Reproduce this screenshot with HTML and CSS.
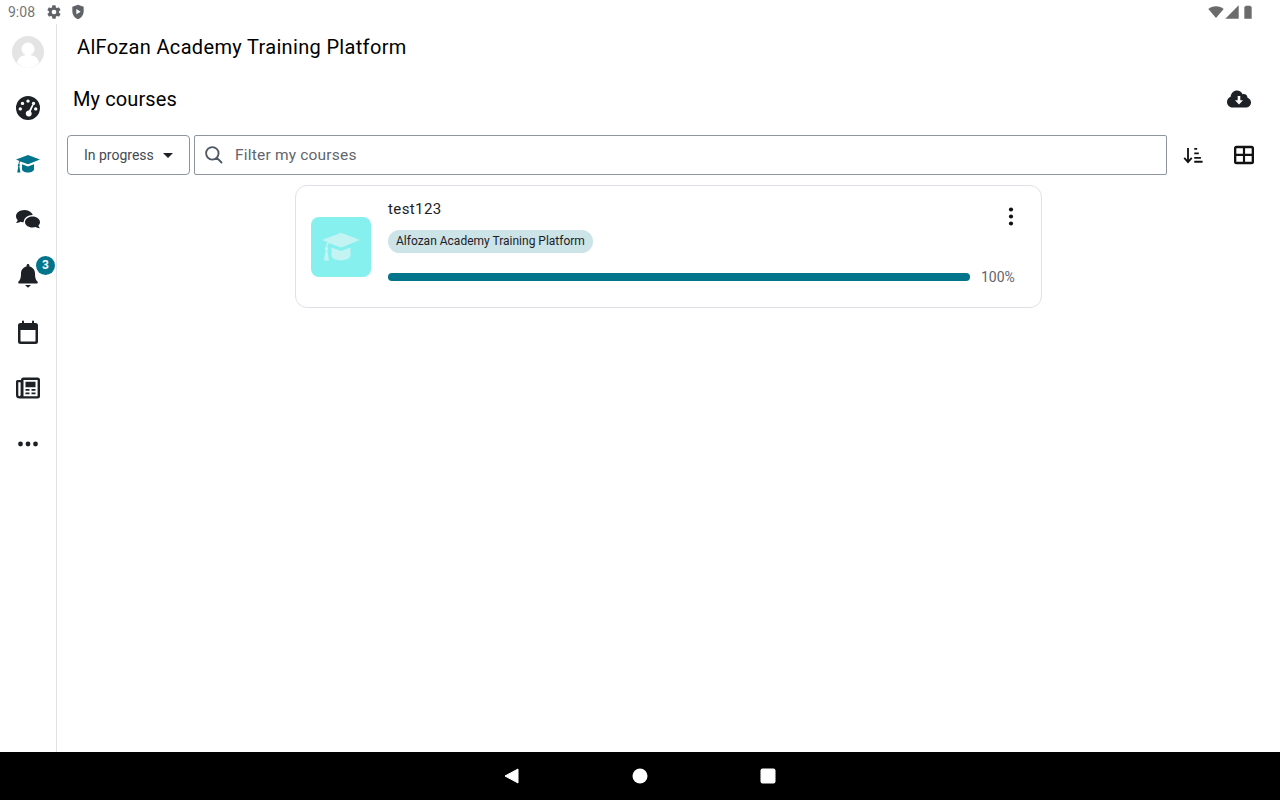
FILE: index.html
```html
<!DOCTYPE html>
<html lang="en">
<head>
    <meta charset="UTF-8">
    <title>My courses</title>
    <link rel="stylesheet" href="styles.css">
</head>
<body>
    <div class="status-bar">
        <span class="clock">9:08</span>
        <svg class="status-icon" viewBox="0 0 24 24"><path d="M19.4 13c.1-.3.1-.7.1-1s0-.7-.1-1l2.1-1.600c.2-.1.2-.4.1-.6l-2-3.500c-.1-.2-.4-.3-.6-.2l-2.500 1c-.5-.4-1.100-.7-1.700-1l-.4-2.700c0-.2-.2-.4-.5-.4h-4c-.2 0-.4.2-.5.4l-.4 2.700c-.6.3-1.100.6-1.700 1l-2.500-1c-.2-.1-.5 0-.6.2l-2 3.500c-.1.2-.1.5.1.6L4.500 11c0 .3-.1.7-.1 1s0 .7.1 1l-2.100 1.600c-.2.1-.2.4-.1.6l2 3.500c.1.2.4.3.6.2l2.500-1c.5.4 1.100.7 1.700 1l.4 2.700c0 .2.2.4.5.4h4c.2 0 .4-.2.5-.4l.4-2.700c.6-.3 1.100-.6 1.700-1l2.500 1c.2.1.5 0 .6-.2l2-3.500c.1-.2.1-.5-.1-.6zM12 15.500a3.500 3.500 0 1 1 0-7 3.500 3.500 0 0 1 0 7z"/></svg>
        <svg class="status-icon" viewBox="0 0 24 24"><path fill-rule="evenodd" d="M12 1 3.500 4v7c0 5.500 3.600 10.300 8.500 12 4.900-1.700 8.500-6.500 8.500-12V4zM9.500 7.500v8l6.500-4z"/></svg>
        <span class="status-right">
            <svg class="status-icon" viewBox="0 0 24 24"><path d="M12 21 .5 7.500C3.500 4.800 7.500 3.500 12 3.500s8.500 1.300 11.500 4z"/></svg>
            <svg class="status-icon" viewBox="0 0 24 24"><path d="M22 2v20H2z"/></svg>
            <svg class="status-icon" viewBox="0 0 24 24"><path d="M8 4V2.500h8V4h1.500v18h-11V4z"/></svg>
        </span>
    </div>

    <div class="app">
        <nav class="rail">
            <div class="rail-item avatar-item">
                <svg class="avatar" viewBox="0 0 32 32">
                    <circle cx="16" cy="16" r="16" fill="#e4e4e4"/>
                    <circle cx="16" cy="13" r="6.500" fill="#fff"/>
                    <path d="M5 27c1-6 5-8 11-8s10 2 11 8c-3 3-7 5-11 5s-8-2-11-5z" fill="#fff"/>
                </svg>
            </div>
            <div class="rail-item">
                <svg class="rail-icon" viewBox="0 0 24 24"><path fill-rule="evenodd" d="M12 0a12 12 0 1 0 0 24 12 12 0 0 0 0-24zm0 3.400a1.700 1.700 0 1 1 0 3.400 1.700 1.700 0 0 1 0-3.400zM6.500 5.700a1.700 1.700 0 1 1 0 3.400 1.700 1.700 0 0 1 0-3.400zm11 0a1.700 1.700 0 1 1 0 3.400 1.700 1.700 0 0 1 0-3.400zM4.300 11.200a1.700 1.700 0 1 1 0 3.400 1.700 1.700 0 0 1 0-3.400zm11.900-2.700 1.400.5-2.800 6.400a3 3 0 1 1-1.800-.8zM19.700 11.200a1.700 1.700 0 1 1 0 3.400 1.700 1.700 0 0 1 0-3.400z"/></svg>
            </div>
            <div class="rail-item">
                <svg class="rail-icon rail-icon-active" viewBox="0 0 24 24"><path d="M12 3 0 7.600l3.400 1.300c-.5.900-.8 2-.9 3a1.400 1.400 0 0 0-.2 2.300L1.200 20.500h3.200l-1-6.300a1.400 1.400 0 0 0-.1-2.200c.1-1 .5-1.900 1.100-2.600L12 12.300l12-4.700z"/><path d="M6 12.300v4.900c0 1.800 2.700 3.300 6 3.300s6-1.500 6-3.300v-4.900l-6 2.300z"/></svg>
            </div>
            <div class="rail-item">
                <svg class="rail-icon" viewBox="0 0 24 24"><path d="M8.500 2C3.800 2 0 4.800 0 8.300c0 1.400.6 2.700 1.700 3.700-.4 1.300-1.300 2.300-1.400 2.400-.1.200 0 .5.300.5 1.500 0 2.900-.6 3.900-1.200 1.200.4 2.600.6 4 .6 4.700 0 8.500-2.800 8.500-6S13.200 2 8.500 2z"/><path d="M16.500 8.500c4.200 0 7.500 2.500 7.500 5.600 0 1.400-.6 2.600-1.600 3.500.3 1.200 1.100 2.100 1.300 2.300.1.200 0 .4-.2.400-1.500 0-2.800-.5-3.700-1.200-1 .3-2.100.5-3.300.5-4.200 0-7.500-2.400-7.500-5.500s3.300-5.600 7.500-5.600z" stroke="#fff" stroke-width="3" paint-order="stroke"/></svg>
            </div>
            <div class="rail-item">
                <svg class="rail-icon" viewBox="0 0 24 24"><path d="M12 0c-.8 0-1.400.6-1.400 1.400v1C7 3.100 5 6 5 9.500c0 5.500-1.500 7-2.600 8.300-.5.600-.2 1.700.7 1.700h17.800c.9 0 1.200-1.100.7-1.700C20.500 16.500 19 15 19 9.500c0-3.500-2-6.400-5.600-7.100v-1C13.400.6 12.800 0 12 0z"/><path d="M9 21h6l-3 2.800z"/></svg>
                <span class="badge">3</span>
            </div>
            <div class="rail-item">
                <svg class="rail-icon" viewBox="0 0 24 24"><path fill-rule="evenodd" d="M7 .5a1 1 0 0 1 1 1V3h8V1.500a1 1 0 1 1 2 0V3h1.500A2.500 2.500 0 0 1 22 5.500v16a2.500 2.500 0 0 1-2.500 2.500h-15A2.500 2.500 0 0 1 2 21.500v-16A2.500 2.500 0 0 1 4.500 3H6V1.500a1 1 0 0 1 1-1zM4.500 10v11c0 .3.200.5.500.5h14c.3 0 .5-.2.500-.5V10z"/></svg>
            </div>
            <div class="rail-item">
                <svg class="rail-icon" viewBox="0 0 24 24"><path fill-rule="evenodd" d="M7.500 1.500h14A2.500 2.500 0 0 1 24 4v16a2.500 2.500 0 0 1-2.500 2.500h-18A3.500 3.500 0 0 1 0 19V5.500A1.500 1.500 0 0 1 1.500 4H5V4a2.500 2.500 0 0 1 2.500-2.500zM7.500 4v15.500c0 .3 0 .5-.1.700h13.800c.2 0 .4-.2.400-.4V4zM2.300 6.300V19a1.100 1.100 0 0 0 2.300 0V6.300z"/><path d="M9.500 5.800h10v5.500h-10zM9.500 13h4v1.800h-4zM15.500 13h4v1.800h-4zM9.500 16.500h4v1.800h-4zM15.500 16.500h4v1.800h-4z"/></svg>
            </div>
            <div class="rail-item">
                <svg class="rail-icon" viewBox="0 0 24 24"><circle cx="4.500" cy="12" r="2.400"/><circle cx="12" cy="12" r="2.400"/><circle cx="19.500" cy="12" r="2.400"/></svg>
            </div>
        </nav>

        <main class="content">
            <h1 class="site-title">AlFozan Academy Training Platform</h1>

            <div class="page-head">
                <h2 class="page-title">My courses</h2>
                <svg class="cloud" viewBox="0 0 24 24"><path fill-rule="evenodd" d="M10 3.500c2.500 0 4.700 1.500 5.600 3.800 2.500-.8 4.900 1 4.900 3.500 2 .7 3.500 2.500 3.500 4.700 0 2.800-2.200 5-5 5H5.500C2.500 20.500 0 18 0 15c0-2.300 1.500-4.400 3.600-5.200C4 6.200 6.700 3.500 10 3.500zm.7 5.500v4.300H8l4 4.200 4-4.200h-2.700V9z"/></svg>
            </div>

            <div class="filters">
                <button class="select">In progress<span class="caret"></span></button>
                <div class="search">
                    <svg class="search-icon" viewBox="0 0 24 24"><path d="M21 21l-5.400-5.400M17.500 10a7.500 7.500 0 1 1-15 0 7.500 7.500 0 0 1 15 0z" fill="none" stroke="currentColor" stroke-width="2.200" stroke-linecap="round"/></svg>
                    <span class="search-text">Filter my courses</span>
                </div>
                <div class="tool">
                    <svg class="tool-icon" viewBox="0 0 24 24"><path d="M6 3.500v16M1.500 15.500 6 20.500l4.500-5" fill="none" stroke="#111" stroke-width="2.200"/><path d="M13.500 3.500h3.500v2.200h-3.500zM13.500 9h5.500v2.200h-5.500zM13.500 14.300h8v2.200h-8zM13.500 19h10v2.200h-10z"/></svg>
                </div>
                <div class="tool">
                    <svg class="tool-icon" viewBox="0 0 24 24"><path fill-rule="evenodd" d="M3 1h18a3 3 0 0 1 3 3v16a3 3 0 0 1-3 3H3a3 3 0 0 1-3-3V4a3 3 0 0 1 3-3zM2.800 3.800v6.800h7.900V3.800zm10.500 0v6.800h7.900V3.800zM2.800 13.300v6.900h7.900v-6.900zm10.500 0v6.900h7.900v-6.900z"/></svg>
                </div>
            </div>

            <div class="course-list">
                <article class="course-card">
                    <div class="thumb">
                        <svg class="thumb-icon" viewBox="0 0 24 24"><path d="M12 3 0 7.600l3.400 1.300c-.5.900-.8 2-.9 3a1.400 1.400 0 0 0-.2 2.300L1.200 20.500h3.200l-1-6.300a1.400 1.400 0 0 0-.1-2.200c.1-1 .5-1.900 1.100-2.600L12 12.300l12-4.700z"/><path d="M6 12.300v4.900c0 1.800 2.700 3.300 6 3.300s6-1.500 6-3.300v-4.900l-6 2.300z"/></svg>
                    </div>
                    <div class="course-body">
                        <div class="course-top">
                            <div class="course-name">test123</div>
                            <svg class="kebab" viewBox="0 0 6 19"><circle cx="3" cy="2.500" r="2.100"/><circle cx="3" cy="9.500" r="2.100"/><circle cx="3" cy="16.500" r="2.100"/></svg>
                        </div>
                        <span class="chip">Alfozan Academy Training Platform</span>
                        <div class="progress-row">
                            <div class="progress"><div class="progress-fill" style="width: 100%"></div></div>
                            <span class="progress-text">100%</span>
                        </div>
                    </div>
                </article>
            </div>
        </main>
    </div>

    <div class="nav-bar">
        <svg class="nav-icon" viewBox="0 0 16 16"><path d="M14 1v14L1 8z" stroke="#fff" stroke-linejoin="round"/></svg>
        <svg class="nav-icon" viewBox="0 0 16 16"><circle cx="8" cy="8" r="7.500"/></svg>
        <svg class="nav-icon" viewBox="0 0 16 16"><rect x="0.500" y="0.500" width="15" height="15" rx="2"/></svg>
    </div>
</body>
</html>
```

FILE: styles.css
```css
* {
    box-sizing: border-box;
}
body {
    margin: 0;
    height: 800px;
    display: flex;
    flex-direction: column;
    font-family: Roboto, "Liberation Sans", sans-serif;
    background-color: #fff;
    color: #111;
    overflow: hidden;
}
.status-bar {
    height: 24px;
    flex: none;
    display: flex;
    align-items: center;
    gap: 8px;
    padding: 0 24px 0 8px;
    color: #757575;
    fill: #5f6368;
}
.clock {
    font-size: 14px;
    margin-right: 3px;
}
.status-icon {
    width: 16px;
    height: 16px;
}
.status-right {
    margin-left: auto;
    display: flex;
    fill: #6b6b6b;
}
.app {
    flex: 1;
    display: flex;
    min-height: 0;
}
.rail {
    width: 57px;
    flex: none;
    border-right: 1px solid #dee2e6;
}
.rail-item {
    height: 56px;
    display: flex;
    align-items: center;
    justify-content: center;
    position: relative;
}
.avatar {
    width: 32px;
    height: 32px;
}
.rail-icon {
    width: 24px;
    height: 24px;
    fill: #1d2125;
}
.rail-icon-active {
    fill: #02748c;
}
.badge {
    position: absolute;
    top: 8px;
    left: 36px;
    width: 19px;
    height: 19px;
    border-radius: 50%;
    background-color: #02748c;
    color: #fff;
    font-size: 12px;
    font-weight: 700;
    line-height: 19px;
    text-align: center;
}
.content {
    flex: 1;
    min-width: 0;
    padding: 0 10px;
}
.site-title {
    margin: 0;
    height: 48px;
    padding-left: 10px;
    font-size: 20px;
    font-weight: 400;
    letter-spacing: 0.33px;
    line-height: 46px;
    color: #000;
}
.page-head {
    height: 53px;
    display: flex;
    align-items: center;
    justify-content: space-between;
    padding: 0 4px 0 6px;
}
.page-title {
    margin: 0;
    font-size: 20px;
    font-weight: 400;
    letter-spacing: 0.1px;
    color: #000;
}
.cloud {
    width: 24px;
    height: 24px;
    margin-right: 15px;
    fill: #1d2125;
}
.filters {
    height: 40px;
    margin-top: 10px;
    display: flex;
}
.select {
    width: 123px;
    height: 40px;
    flex: none;
    display: flex;
    align-items: center;
    gap: 9px;
    margin-right: 4px;
    padding: 0 0 0 16px;
    border: 1px solid #8f959e;
    border-radius: 4px;
    background-color: #fff;
    font-family: inherit;
    font-size: 14px;
    color: #444b52;
}
.caret {
    width: 0;
    height: 0;
    border-left: 5px solid transparent;
    border-right: 5px solid transparent;
    border-top: 5px solid #1d2125;
}
.search {
    flex: 1;
    height: 40px;
    display: flex;
    align-items: center;
    gap: 11px;
    margin-right: 1px;
    padding-left: 9px;
    border: 1px solid #8f959e;
    border-radius: 2px;
}
.search-icon {
    width: 20px;
    height: 20px;
    color: #4f5962;
}
.search-text {
    font-size: 15.500px;
    letter-spacing: 0.2px;
    color: #5f666d;
}
.tool {
    width: 51px;
    flex: none;
    display: flex;
    align-items: center;
    justify-content: center;
    padding-right: 2px;
}
.tool-icon {
    width: 20px;
    height: 20px;
    fill: #111;
}
.course-list {
    display: flex;
    justify-content: center;
    margin-top: 10px;
}
.course-card {
    width: 747px;
    height: 123px;
    display: flex;
    align-items: center;
    gap: 17px;
    padding: 0 25px 0 15px;
    border: 1px solid #dee2e6;
    border-radius: 12px;
}
.thumb {
    width: 60px;
    height: 60px;
    flex: none;
    display: flex;
    align-items: center;
    justify-content: center;
    border-radius: 8px;
    background-color: #86f0ee;
}
.thumb-icon {
    width: 38px;
    height: 38px;
    fill: #c3f4f3;
}
.course-body {
    flex: 1;
    min-width: 0;
    align-self: flex-start;
    padding-top: 11px;
}
.course-top {
    height: 24px;
    display: flex;
    align-items: center;
    justify-content: space-between;
}
.course-name {
    font-size: 15px;
    letter-spacing: 0.4px;
    color: #1d2125;
}
.kebab {
    width: 6px;
    height: 19px;
    margin: 14px 2px 0 0;
    fill: #111;
}
.chip {
    display: block;
    width: fit-content;
    height: 23px;
    margin-top: 9px;
    padding: 0 8px;
    border-radius: 12px;
    background-color: #cce3e8;
    font-size: 12px;
    line-height: 23px;
    color: #1d2125;
}
.progress-row {
    margin-top: 16px;
    display: flex;
    align-items: center;
    gap: 11px;
}
.progress {
    flex: 1;
    height: 8px;
    border-radius: 4px;
    background-color: #e9ecef;
}
.progress-fill {
    height: 100%;
    border-radius: 4px;
    background-color: #02748c;
}
.progress-text {
    width: 35px;
    font-size: 14px;
    color: #5f666d;
}
.nav-bar {
    height: 48px;
    flex: none;
    display: flex;
    align-items: center;
    justify-content: center;
    gap: 112px;
    background-color: #000;
    fill: #fff;
}
.nav-icon {
    width: 16px;
    height: 16px;
}
```
